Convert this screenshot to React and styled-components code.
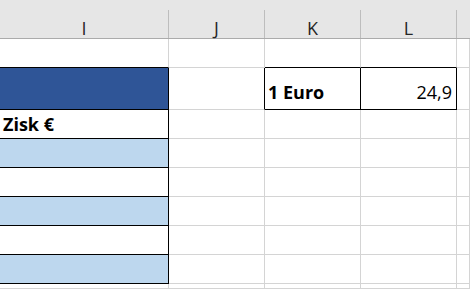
import React from 'react';
import styled, { createGlobalStyle } from 'styled-components';

const GlobalStyle = createGlobalStyle`
  html, body {
    margin: 0;
    padding: 0;
    background: #ffffff;
    overflow: hidden;
  }
  body {
    font-family: 'Open Sans', 'Liberation Sans', sans-serif;
  }
`;

const GRID = '#d4d4d4';
const INK = '#000000';

// Sheet grid: partial column I, then J, K, L and a sliver of M
const Sheet = styled.div`
  display: grid;
  grid-template-columns: 169px 96px 96px 96px 1fr;
  grid-template-rows: 39px 29px 42px repeat(6, 29px) 1fr;
  width: 470px;
  height: 289px;
  background: #ffffff;
`;

const HeaderCell = styled.div`
  box-sizing: border-box;
  background: #e6e6e6;
  border-bottom: 1px solid #ababab;
  padding-top: 10px;
  display: flex;
`;

const HeaderLabel = styled.div`
  flex: 1;
  display: flex;
  align-items: flex-end;
  justify-content: center;
  padding-bottom: 1px;
  border-right: 1px solid ${(p) => (p.$last ? 'transparent' : '#bdbdbd')};
  font-size: 18px;
  line-height: 18px;
  color: #262626;
`;

const Cell = styled.div`
  box-sizing: border-box;
  display: flex;
  align-items: flex-end;
  justify-content: ${(p) => (p.$right ? 'flex-end' : 'flex-start')};
  padding: 0 4px ${(p) => p.$pad ?? 4}px 3px;
  background: ${(p) => p.$fill || '#ffffff'};
  border-right: 1px solid ${(p) => (p.$r ? INK : GRID)};
  border-bottom: 1px solid ${(p) => (p.$b ? INK : GRID)};
  font-size: 18px;
  line-height: 18px;
  font-weight: ${(p) => (p.$bold ? 700 : 400)};
  color: #000000;
  white-space: nowrap;
`;

const DARK = '#2f5597';
const LIGHT = '#bdd7ee';

const columns = ['I', 'J', 'K', 'L', ''];

// each row: [I, J, K, L, M] cell props
const rows = [
  [{ $b: true }, {}, { $b: true }, { $b: true }, {}],
  [
    { $fill: DARK, $r: true, $b: true },
    { $r: true },
    { $r: true, $b: true, $bold: true, $pad: 8, text: '1 Euro' },
    { $r: true, $b: true, $right: true, $pad: 8, text: '24,9' },
    {},
  ],
  [{ $r: true, $b: true, $bold: true, $pad: 5, text: 'Zisk €' }, {}, {}, {}, {}],
  [{ $fill: LIGHT, $r: true, $b: true }, {}, {}, {}, {}],
  [{ $r: true, $b: true }, {}, {}, {}, {}],
  [{ $fill: LIGHT, $r: true, $b: true }, {}, {}, {}, {}],
  [{ $r: true, $b: true }, {}, {}, {}, {}],
  [{ $fill: LIGHT, $r: true, $b: true }, {}, {}, {}, {}],
  [{}, {}, {}, {}, {}],
];

export default function App() {
  return (
    <>
      <GlobalStyle />
      <Sheet>
        {columns.map((c, i) => (
          <HeaderCell key={'h' + i}>
            <HeaderLabel $last={i === columns.length - 1}>{c}</HeaderLabel>
          </HeaderCell>
        ))}
        {rows.map((row, ri) =>
          row.map(({ text, ...props }, ci) => (
            <Cell key={ri + '-' + ci} {...props}>
              {text}
            </Cell>
          ))
        )}
      </Sheet>
    </>
  );
}
